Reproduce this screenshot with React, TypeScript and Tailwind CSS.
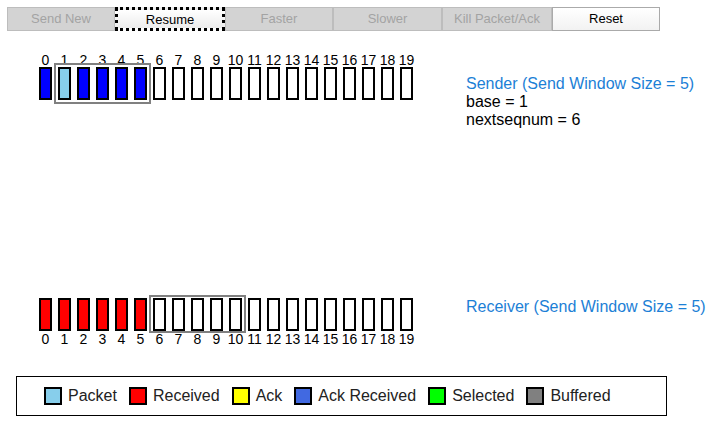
import React from "react";

const senderColors: Record<number, string> = {
  0: "bg-[#0000ff]",
  1: "bg-[#87ceeb]",
  2: "bg-[#0000ff]",
  3: "bg-[#0000ff]",
  4: "bg-[#0000ff]",
  5: "bg-[#0000ff]",
};

const legend = [
  { label: "Packet", color: "bg-[#87ceeb]" },
  { label: "Received", color: "bg-[#ff0000]" },
  { label: "Ack", color: "bg-[#ffff00]" },
  { label: "Ack Received", color: "bg-[#4169e1]" },
  { label: "Selected", color: "bg-[#00ff00]" },
  { label: "Buffered", color: "bg-[#808080]" },
];

const seq = Array.from({ length: 20 }, (_, i) => i);

function Toolbar() {
  const disabled = "h-[24px] border border-[#bdbdbd] bg-[#d3d3d3] text-[#a3a3a3]";
  return (
    <div className="ml-[7px] mt-[7px] flex w-[653px] text-[13px] leading-[20px]">
      <button className={`w-[108px] ${disabled}`}>Send New</button>
      <button className="h-[24px] w-[110px] border-[3px] border-dotted border-black bg-gradient-to-b from-white to-[#ececec] text-black">
        Resume
      </button>
      <button className={`w-[108px] ${disabled}`}>Faster</button>
      <button className={`w-[109px] ${disabled}`}>Slower</button>
      <button className={`w-[110px] ${disabled}`}>Kill Packet/Ack</button>
      <button className="h-[24px] w-[108px] border border-[#aaaaaa] bg-gradient-to-b from-white to-[#f2f2f2] text-black">
        Reset
      </button>
    </div>
  );
}

function Cell({ n, color, labelTop }: { n: number; color?: string; labelTop: boolean }) {
  const label = <div className="h-[15px] text-center text-[14px] leading-[16px] text-black">{n}</div>;
  return (
    <div className="flex w-[19px] flex-col items-center">
      {labelTop && label}
      <div className={`h-[33px] w-[13px] border-2 border-black ${color ?? "bg-white"}`} />
      {!labelTop && label}
    </div>
  );
}

export default function App() {
  return (
    <div className="h-[422px] w-[716px] bg-white font-['Liberation_Sans',Arial,sans-serif] text-black">
      <Toolbar />

      {/* sender */}
      <div className="ml-[36px] mt-[21px] flex h-[77px]">
        <div className="relative flex">
          {seq.map((n) => (
            <Cell key={n} n={n} color={senderColors[n]} labelTop />
          ))}
          <div className="absolute left-[18px] top-[11px] h-[41px] w-[97px] border-2 border-[#808080]" />
        </div>
        <div className="ml-[50px] mt-[23px] text-[16px] leading-[18px]">
          <div className="text-[#1c80d6]">Sender (Send Window Size = 5)</div>
          <div>base = 1</div>
          <div>nextseqnum = 6</div>
        </div>
      </div>

      {/* receiver */}
      <div className="ml-[36px] mt-[169px] flex">
        <div className="relative flex">
          {seq.map((n) => (
            <Cell key={n} n={n} color={n < 6 ? "bg-[#ff0000]" : undefined} labelTop={false} />
          ))}
          <div className="absolute left-[113px] top-[-3px] h-[38px] w-[97px] border-2 border-[#808080]" />
        </div>
        <div className="ml-[50px] text-[16px] leading-[18px] text-[#1c80d6]">Receiver (Send Window Size = 5)</div>
      </div>

      {/* legend */}
      <div className="ml-[16px] mt-[30px] flex h-[40px] w-[651px] items-center border border-black pl-[27px] text-[16px]">
        {legend.map((l) => (
          <div key={l.label} className="mr-[12px] flex items-center">
            <div className={`h-[18px] w-[18px] border-2 border-black ${l.color}`} />
            <span className="ml-[6px] text-[#222]">{l.label}</span>
          </div>
        ))}
      </div>
    </div>
  );
}
